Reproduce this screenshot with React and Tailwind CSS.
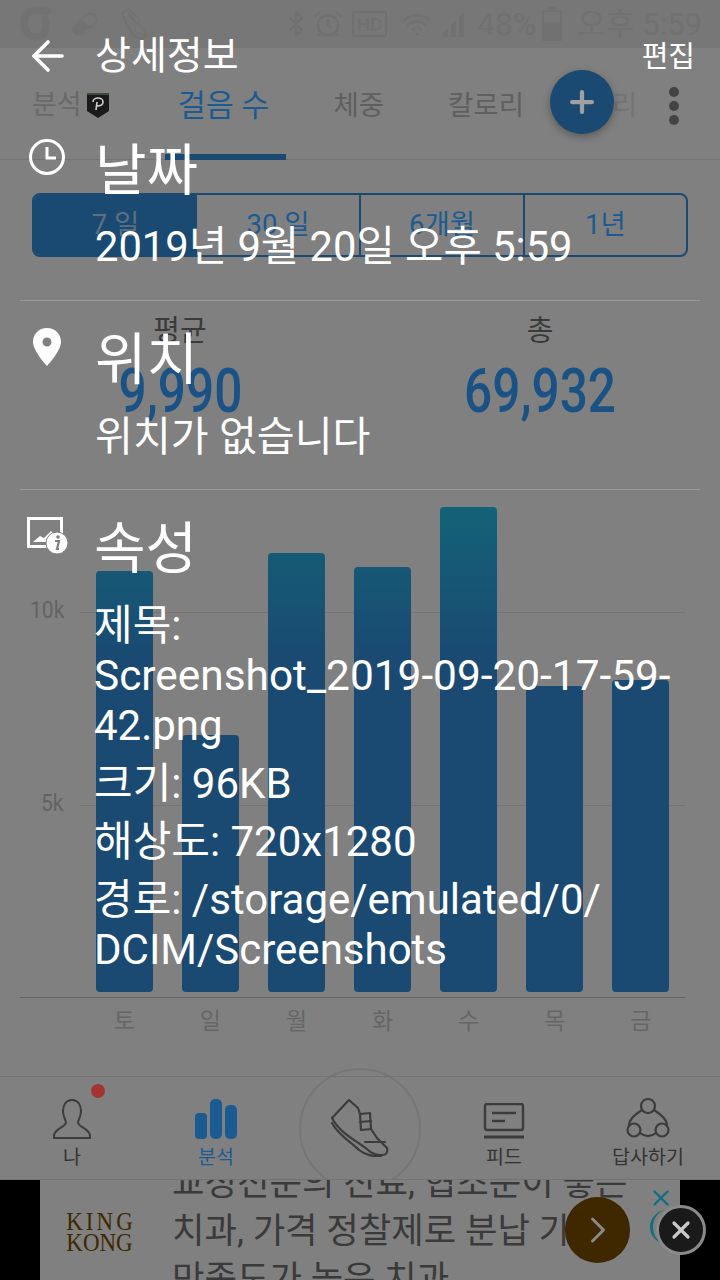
import React from "react";
import { ArrowLeft, Bluetooth, AlarmClock, Wifi, Plus, X, ChevronRight } from "lucide-react";

const FONT = "font-['Roboto','Noto_Sans_CJK_KR',sans-serif]";
const BAR_BASE = 992;
const FILL_TOP = 507;
const FILL_SPAN = 150;

const bars = [
  { day: "토", top: 571 },
  { day: "일", top: 735 },
  { day: "월", top: 553 },
  { day: "화", top: 567 },
  { day: "수", top: 507 },
  { day: "목", top: 686 },
  { day: "금", top: 680 },
];

function StatusBar() {
  return (
    <div className="h-[48px] bg-[#777777] flex items-center pl-[20px] pr-[18px] text-[#717171]">
      <svg width="34" height="38" viewBox="0 0 34 38" fill="none">
        <path d="M31 6H15C8 6 4 10 4 18c0 9 5 14 12 14s10-5 10-13c0-4-1-6-3-8" stroke="#727272" strokeWidth="7" />
      </svg>
      <svg className="ml-[18px]" width="26" height="26" viewBox="0 0 26 26" fill="#727272">
        <path d="M16 3a6 6 0 018 8l-6 6-9-9z" fill="none" stroke="#727272" strokeWidth="1.500" />
        <path d="M8 8l9 9-6 6a6 6 0 01-9-9z" />
      </svg>
      <svg className="ml-[22px]" width="28" height="34" viewBox="0 0 28 34" fill="none" stroke="#727272" strokeWidth="2">
        <path d="M2 6l7-4 4 5 5 3 1 7 6 7 1 5-4 3-8-3-8-13z" />
        <path d="M8 6l10 12M15 24l9 5" />
      </svg>
      <div className="ml-auto flex items-center">
        <Bluetooth size={28} strokeWidth={2} />
        <AlarmClock className="ml-[3px]" size={30} strokeWidth={2} />
        <div className="ml-[9px] w-[35px] h-[26px] border-2 border-[#717171] rounded-[3px] flex items-center justify-center text-[19px] leading-none font-medium">HD</div>
        <Wifi className="ml-[15px]" size={30} strokeWidth={2} />
        <svg className="ml-[8px]" width="26" height="26" viewBox="0 0 26 26" fill="#717171">
          <path d="M24 2v24h-5V6zM16 9v17h-5V14zM8 17v9H3v-4z" />
        </svg>
        <span className="ml-[11px] text-[32px] leading-none">48%</span>
        <div className="ml-[6px] w-[20px] h-[34px] flex flex-col items-center">
          <div className="w-[8px] h-[3px] bg-[#717171]" />
          <div className="w-full flex-1 border-2 border-[#717171] flex flex-col justify-end">
            <div className="h-[17px] bg-[#717171]" />
          </div>
        </div>
        <span className="ml-[15px] text-[31px] leading-none">오후 5:59</span>
      </div>
    </div>
  );
}

function TabRow() {
  return (
    <div className="relative h-[112px] border-b border-[#737373] text-[#5f5f5f]">
      <div className="flex items-center h-[112px] pt-[3px]">
        <span className="ml-[32px] text-[27px] text-[#696969]">분석</span>
        <svg className="ml-[5px]" width="22" height="25" viewBox="0 0 22 25">
          <path d="M0 0h22v18l-11 7-11-7z" fill="#1a1a1a" />
          <path d="M0 0h22v2H0z" fill="#3a4a3a" />
          <path d="M9 17l1-8M6 9c0-3 3-4 5-4s5 1 5 4-3 4-6 4" stroke="#d0d0d0" strokeWidth="1.600" fill="none" />
        </svg>
        <span className="ml-[69px] text-[30.500px] text-[#1c5b91]">걸음 수</span>
        <span className="ml-[64px] text-[27.500px]">체중</span>
        <span className="ml-[64px] text-[27.500px]">칼로리</span>
        <span className="ml-[88px] text-[27.500px] text-[#747474]">리</span>
      </div>
      <div className="absolute left-[165px] top-[106px] w-[121px] h-[6px] bg-[#1a4a72]" />
    </div>
  );
}

function Summary() {
  return (
    <div className="px-[32px] pt-[33px]">
      <div className="grid grid-cols-[163px_164px_164px_161px] h-[64px] rounded-[8px] border-2 border-[#1a4a72] overflow-hidden text-[27.500px] text-[#1c5b91]">
        <div className="bg-[#1a4a72] text-[#5e6f80] flex items-center justify-center">7 일</div>
        <div className="border-r-2 border-[#1a4a72] flex items-center justify-center">30 일</div>
        <div className="border-r-2 border-[#1a4a72] flex items-center justify-center">6개월</div>
        <div className="flex items-center justify-center">1년</div>
      </div>
      <div className="grid grid-cols-2 mt-[50px] -mx-[32px] text-center">
        {[
          ["평균", "9,990"],
          ["총", "69,932"],
        ].map(([label, value]) => (
          <div key={label} className="flex flex-col items-center pt-[4px]">
            <span className="text-[29px] leading-[40px] text-[#3a3a3a]">{label}</span>
            <span className="text-[62px] leading-[80px] font-medium text-[#1a5285] scale-x-[0.8]">{value}</span>
          </div>
        ))}
      </div>
    </div>
  );
}

function Chart() {
  return (
    <div className="relative h-[600px]">
      <div className="absolute left-0 right-[35px] top-[167px] flex items-center">
        <span className="w-[80px] pl-[30px] pb-[4px] text-[24px] leading-[24px] text-[#636363] scale-x-[0.88] origin-[30px_50%]">10k</span>
        <div className="flex-1 h-px bg-[#747474]" />
      </div>
      <div className="absolute left-0 right-[35px] top-[360px] flex items-center">
        <span className="w-[80px] pl-[41px] pb-[4px] text-[24px] leading-[24px] text-[#636363] scale-x-[0.88] origin-[41px_50%]">5k</span>
        <div className="flex-1 h-px bg-[#747474]" />
      </div>
      <div className="absolute left-[96px] top-0 bottom-0 flex gap-[29.400px]">
        {bars.map((b) => {
          const height = BAR_BASE - b.top;
          const shift = b.top - FILL_TOP;
          const fade = Math.max(0, 1 - shift / FILL_SPAN);
          return (
            <div key={b.day} className="relative w-[56.700px]">
              <div
                className="absolute left-0 right-0 rounded-[4px] overflow-hidden"
                style={{
                  top: shift + 76,
                  height,
                  background: `linear-gradient(to bottom, rgb(${Math.round(26 - 7 * fade)},${Math.round(74 + 24 * fade)},${Math.round(114 + 5 * fade)}), #1a4a72 ${FILL_SPAN - shift > 0 ? FILL_SPAN - shift : 1}px)`,
                }}
              />
              <span className="absolute left-0 right-0 top-[577px] text-center text-[23px] leading-[28px] text-[#666666]">{b.day}</span>
            </div>
          );
        })}
      </div>
      <div className="absolute left-[20px] w-[665px] top-[566px] h-[1px] bg-[#666666]" />
    </div>
  );
}

function NavItem({ label, active, children }) {
  return (
    <div className={`w-[144px] flex flex-col items-center pt-[20px] ${active ? "text-[#1c5b91]" : "text-[#333333]"}`}>
      <div className="h-[42px] flex items-end">{children}</div>
      <span className="mt-[6px] text-[19.500px] leading-[26px]">{label}</span>
    </div>
  );
}

function BottomNav() {
  const stroke = "#3c3c3c";
  return (
    <div className="absolute left-0 right-0 top-[1076px] h-[104px] border-t border-b border-[#737373] flex">
      <NavItem label="나">
        <svg width="38" height="40" viewBox="0 0 38 40" fill="none" stroke={stroke} strokeWidth="2">
          <path d="M19 1c-6 0-9 5-9 11 0 5 2 8 3 11 1 5-12 6-12 14v2h36v-2c0-8-13-9-12-14 1-3 3-6 3-11 0-6-3-11-9-11z" />
        </svg>
      </NavItem>
      <NavItem label="분석" active>
        <svg width="42" height="40" viewBox="0 0 42 40" fill="#1c5b91">
          <rect x="0" y="14" width="12" height="26" rx="4" />
          <rect x="15" y="0" width="12" height="40" rx="5" />
          <rect x="30" y="6" width="12" height="34" rx="5" />
        </svg>
      </NavItem>
      <div className="w-[144px] flex items-start justify-center pt-[22px] relative">
        <svg width="58" height="58" viewBox="0 0 58 58" fill="none" stroke={stroke} strokeWidth="2.200" strokeLinejoin="round" strokeLinecap="round">
          <path d="M1 19L18 1l9 8 2 6 10-1 1 16 6 9 10 10c1 5-1 7-5 7-5 0-10-1-14-5C27 42 10 36 1 19z" />
          <path d="M1 24c7 13 18 18 27 27 5 4 14 7 22 6" />
          <path d="M29 15l1 16 10-1M29 23l11-1" />
          <path d="M34 43l20 0" />
        </svg>
      </div>
      <NavItem label="피드">
        <svg width="42" height="36" viewBox="0 0 42 36" fill="none" stroke={stroke} strokeWidth="2.400">
          <rect x="2" y="1" width="38" height="26" rx="2" />
          <path d="M9 10h24M9 18h13" />
          <path d="M1 34h40" strokeWidth="3" />
        </svg>
      </NavItem>
      <NavItem label="답사하기">
        <svg width="44" height="42" viewBox="0 0 44 42" fill="none" stroke={stroke} strokeWidth="2.200">
          <circle cx="22" cy="9" r="7" />
          <circle cx="8" cy="33" r="6.500" />
          <circle cx="36" cy="33" r="6.500" />
          <path d="M16 13C8 18 3 23 3 28M28 13c8 5 13 10 13 15M14 36c5 4 11 4 16 0" />
        </svg>
      </NavItem>
    </div>
  );
}

function AdBanner() {
  return (
    <div className="absolute left-0 right-0 top-[1180px] h-[100px] bg-black flex justify-center">
      <div className="relative w-[640px] h-full bg-[#808080] overflow-hidden flex">
        <div className="w-[119px] shrink-0 flex flex-col items-center justify-center pt-[3px] font-['Liberation_Serif',serif] text-[23px] leading-[19px] text-[#3f2800] scale-y-[1.1]">
          <span className="tracking-[3px] pl-[3px]">KING</span>
          <span>KONG</span>
        </div>
        <div className="ml-[13px] -mt-[21px] text-[35.300px] leading-[48px] text-[#3a3a3a] whitespace-nowrap">
          <div>교정전문의 진료, 협조문이 좋은</div>
          <div>치과, 가격 정찰제로 분납 가능,</div>
          <div>만족도가 높은 치과</div>
        </div>
        <X className="absolute left-[608px] top-[5px] text-[#0e6f80]" size={26} strokeWidth={2.200} />
        <div className="absolute left-[610px] top-[30px] w-[24px] h-[34px] border-l-[3px] border-[#0e6f80] rounded-l-full" />
      </div>
    </div>
  );
}

export default function App() {
  return (
    <div className={`relative w-[720px] h-[1280px] overflow-hidden bg-[#808080] ${FONT}`}>
      <StatusBar />
      <TabRow />
      <Summary />
      <Chart />
      <BottomNav />
      <AdBanner />

      {/* Floating controls that sit over the page */}
      <div className="absolute left-[550px] top-[70px] w-[64px] h-[64px] rounded-full bg-[#1a4a72] flex items-center justify-center shadow-[0_3px_8px_rgba(0,0,0,0.3)]">
        <Plus className="text-[#a0a0a0]" size={34} strokeWidth={3} />
      </div>
      <div className="absolute left-[669px] top-[87px] flex flex-col gap-[4px]">
        <span className="w-[10px] h-[10px] rounded-full bg-[#444444]" />
        <span className="w-[10px] h-[10px] rounded-full bg-[#444444]" />
        <span className="w-[10px] h-[10px] rounded-full bg-[#444444]" />
      </div>
      <span className="absolute left-[91px] top-[1084px] w-[14px] h-[14px] rounded-full bg-[#a33434]" />
      <div className="absolute left-[299px] top-[1068px] w-[122px] h-[112px] overflow-hidden">
        <div className="w-[122px] h-[122px] rounded-full border-2 border-[#767676]" />
      </div>
      <div className="absolute left-[565px] top-[1197px] w-[65px] h-[66px] rounded-full bg-[#3f2800] flex items-center justify-center">
        <ChevronRight className="text-[#8a8a8a]" size={44} strokeWidth={1.600} />
      </div>
      <div className="absolute left-[656px] top-[1205px] w-[50px] h-[50px] rounded-full bg-[#1a1a1a] border-[3px] border-[#8a8a8a] flex items-center justify-center">
        <X className="text-[#c8c8c8]" size={28} strokeWidth={2.800} />
      </div>

      {/* Details sheet laid over the dimmed screen */}
      <div className="absolute inset-0 text-white">
        <div className="h-[48px]" />
        <div className="h-[88px] relative flex items-start">
          <ArrowLeft className="ml-[24px] mt-[-16px]" size={48} strokeWidth={1.800} />
          <span className="ml-[23px] mt-[-16px] text-[39px] leading-[48px]">상세정보</span>
          <span className="ml-auto mr-[25px] mt-[-9px] text-[29px] leading-[36px]">편집</span>
        </div>

        <section className="mx-[20px] h-[165px] border-b border-[#9a9a9a] flex">
          <svg className="ml-[8px] mt-[2px] shrink-0" width="38" height="38" viewBox="0 0 38 38" fill="none" stroke="white" strokeWidth="3">
            <circle cx="19" cy="19" r="16.500" />
            <path d="M19 9v11h9" />
          </svg>
          <div className="ml-[29px] pt-[5px]">
            <div className="text-[56px] leading-[60px]">날짜</div>
            <div className="mt-[22px] text-[41.700px] leading-[48px] whitespace-nowrap">2019년 9월 20일 오후 5:59</div>
          </div>
        </section>

        <section className="mx-[20px] h-[189px] border-b border-[#9a9a9a] flex">
          <svg className="ml-[13px] mt-[27px] shrink-0" width="28" height="38" viewBox="0 0 28 38" fill="white">
            <path fillRule="evenodd" d="M14 0C6 0 0 6 0 14c0 9 14 24 14 24s14-15 14-24C28 6 22 0 14 0zm0 9.500a4.500 4.500 0 110 9 4.500 4.500 0 010-9z" />
          </svg>
          <div className="ml-[34px] pt-[29px]">
            <div className="text-[56px] leading-[60px]">위치</div>
            <div className="mt-[23px] text-[41.200px] leading-[48px] whitespace-nowrap">위치가 없습니다</div>
          </div>
        </section>

        <section className="mx-[20px] flex">
          <svg className="ml-[7px] mt-[27px] shrink-0" width="41" height="37" viewBox="0 0 41 37">
            <path d="M1.500 1.500h33v28h-33z" fill="none" stroke="white" strokeWidth="3" />
            <path d="M6 25l7-6 4 2 7-7 3 4 3 7z" fill="white" />
            <circle cx="30" cy="26" r="11" fill="white" stroke="#808080" strokeWidth="1" />
            <circle cx="31" cy="20" r="1.800" fill="#808080" />
            <path d="M28 24h4l-2 8h2" fill="none" stroke="#808080" strokeWidth="2.200" />
          </svg>
          <div className="ml-[26px] w-[600px] pt-[29px]">
            <div className="text-[56px] leading-[60px]">속성</div>
            <div className="mt-[22px] text-[42px] leading-[50px] whitespace-nowrap">
              <div>제목:</div>
              <div>
                <span className="text-[42.400px]">Screenshot_2019-09-20-17-59-</span>
                <br />
                42.png
              </div>
              <div className="mt-[8px]">크기: 96KB</div>
              <div className="mt-[8px]">해상도: 720x1280</div>
              <div className="mt-[8px]">
                경로: /storage/emulated/0/
                <br />
                DCIM/Screenshots
              </div>
            </div>
          </div>
        </section>
      </div>
    </div>
  );
}
